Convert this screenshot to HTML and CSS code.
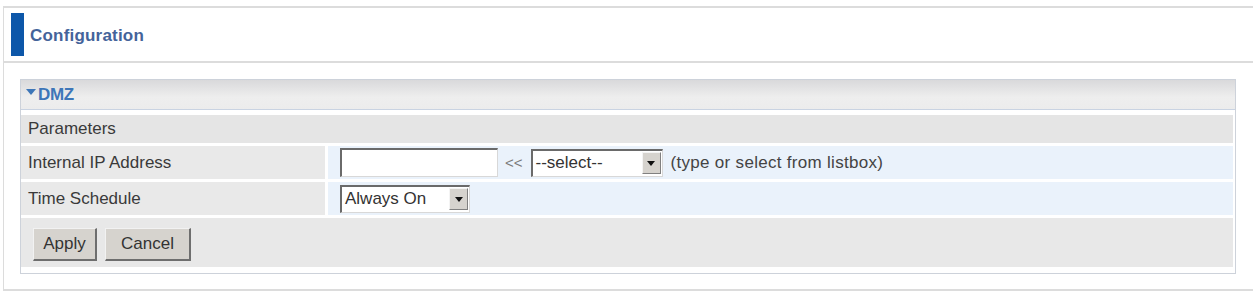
FILE: index.html
```html
<!DOCTYPE html>
<html>
<head>
<meta charset="utf-8">
<link rel="stylesheet" href="styles.css">
</head>
<body>
<div class="frame">
  <div class="title-bar">
    <span class="title-mark"></span>
    <span class="title-text">Configuration</span>
  </div>
  <div class="panel">
    <div class="panel-head"><span class="tri"></span>DMZ</div>
    <div class="rows">
      <div class="row-section">Parameters</div>
      <div class="row">
        <div class="lbl">Internal IP Address</div>
        <div class="val">
          <span class="textbox"></span>
          <span class="arrows">&lt;&lt;</span>
          <span class="select sel-ip"><span class="sel-text">--select--</span><span class="sel-btn"><span class="caret"></span></span></span>
          <span class="hint">(type or select from listbox)</span>
        </div>
      </div>
      <div class="row">
        <div class="lbl">Time Schedule</div>
        <div class="val">
          <span class="select sel-time"><span class="sel-text">Always On</span><span class="sel-btn"><span class="caret"></span></span></span>
        </div>
      </div>
      <div class="row-buttons">
        <button class="btn btn-apply">Apply</button>
        <button class="btn btn-cancel">Cancel</button>
      </div>
    </div>
  </div>
</div>
</body>
</html>
```

FILE: styles.css
```css
html, body {
  margin: 0;
  padding: 0;
  background: #ffffff;
}
body {
  font-family: "Liberation Sans", Arial, sans-serif;
  color: #3a3a3a;
}
.frame {
  margin: 6px 0 0 3px;
  height: 285px;
  box-sizing: border-box;
  border-top: 2px solid #dcdcdc;
  border-left: 1px solid #dcdcdc;
  border-bottom: 2px solid #dcdcdc;
}
.title-bar {
  height: 53px;
  border-bottom: 2px solid #dcdcdc;
  display: flex;
  align-items: center;
  padding-left: 7px;
}
.title-mark {
  width: 13px;
  height: 43px;
  background: #0d57a9;
  margin-right: 6px;
}
.title-text {
  font-size: 17px;
  font-weight: bold;
  letter-spacing: 0.2px;
  color: #44639a;
  margin-top: 3px;
}
.panel {
  margin: 16px 0 0 16px;
  width: 1216px;
  box-sizing: border-box;
  border: 1px solid #cdd2da;
  padding: 0 2px 6px 0;
  background: #ffffff;
}
.panel-head {
  height: 30px;
  box-sizing: border-box;
  margin-right: -2px;
  background: linear-gradient(#d9d9db, #eeeeee 60%, #ececec);
  border-bottom: 1px solid #c9d3e2;
  color: #3d76b8;
  font-weight: bold;
  font-size: 17px;
  letter-spacing: -0.3px;
  display: flex;
  align-items: center;
  padding-left: 5px;
}
.tri {
  width: 0;
  height: 0;
  border-left: 5px solid transparent;
  border-right: 5px solid transparent;
  border-top: 6px solid #3d76b8;
  margin: 0 2px 6px 0;
}
.rows {
  margin-top: 5px;
  display: flex;
  flex-direction: column;
  gap: 3px;
  font-size: 17px;
}
.row-section {
  height: 28px;
  background: #e5e5e5;
  display: flex;
  align-items: center;
  padding-left: 7px;
}
.row {
  display: flex;
  gap: 3px;
  height: 33px;
}
.lbl {
  width: 297px;
  background: #e9e9e9;
  display: flex;
  align-items: center;
  padding-left: 7px;
}
.val {
  flex: 1;
  background: #eaf2fb;
  display: flex;
  align-items: center;
  padding-left: 12px;
}
.textbox {
  width: 155px;
  height: 26px;
  background: #fff;
  border-top: 2px solid #6a6a6a;
  border-left: 2px solid #6a6a6a;
  border-right: 1px solid #d8d8d8;
  border-bottom: 1px solid #d8d8d8;
}
.arrows {
  color: #7a7a7a;
  font-size: 15px;
  margin: 0 8px 0 7px;
}
.select {
  display: flex;
  align-items: center;
  height: 28px;
  box-sizing: border-box;
  background: #fff;
  border-top: 2px solid #6a6a6a;
  border-left: 2px solid #6a6a6a;
  border-right: 1px solid #d8d8d8;
  border-bottom: 1px solid #d8d8d8;
}
.sel-ip {
  width: 132px;
}
.sel-time {
  width: 130px;
}
.sel-text {
  flex: 1;
  padding-left: 3px;
  color: #333;
  white-space: nowrap;
}
.sel-btn {
  width: 17px;
  height: 20px;
  margin-right: 1px;
  background: #d6d3ce;
  border-top: 1px solid #f4f4f4;
  border-left: 1px solid #f4f4f4;
  border-right: 1px solid #808080;
  border-bottom: 1px solid #808080;
  display: flex;
  align-items: center;
  justify-content: center;
}
.caret {
  width: 0;
  height: 0;
  border-left: 4px solid transparent;
  border-right: 4px solid transparent;
  border-top: 5px solid #111;
}
.hint {
  margin-left: 8px;
  font-size: 17px;
  letter-spacing: 0.3px;
  color: #444;
}
.row-buttons {
  height: 49px;
  background: #e8e8e8;
  display: flex;
  align-items: center;
  gap: 8px;
  padding-left: 12px;
}
.btn {
  font-family: "Liberation Sans", Arial, sans-serif;
  font-size: 17px;
  color: #333;
  height: 33px;
  background: #d6d3ce;
  border-top: 1px solid #f2f2f2;
  border-left: 1px solid #f2f2f2;
  border-right: 2px solid #6e6e6e;
  border-bottom: 2px solid #6e6e6e;
  padding: 0;
  margin-top: 4px;
}
.btn-apply {
  width: 64px;
}
.btn-cancel {
  width: 86px;
}
```
